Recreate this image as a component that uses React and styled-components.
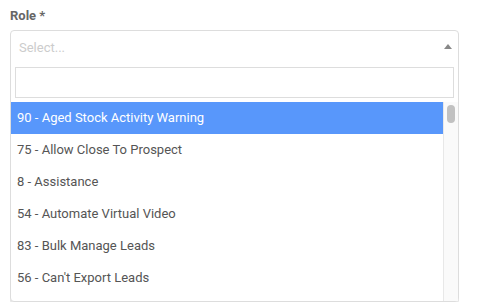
import styled, { createGlobalStyle } from "styled-components";

const GlobalStyle = createGlobalStyle`
    body {
        margin: 0;
        background: #fff;
        font-family: Roboto, "Liberation Sans", sans-serif;
    }
`

const options = [
    '90 - Aged Stock Activity Warning',
    '75 - Allow Close To Prospect',
    '8 - Assistance',
    '54 - Automate Virtual Video',
    '83 - Bulk Manage Leads',
    '56 - Can\'t Export Leads',
]

const App = () => {
    return (
        <>
            <GlobalStyle />
            <Field>
                <Label>Role *</Label>
                <Select>
                    <Selection>
                        <Placeholder>Select...</Placeholder>
                        <Arrow />
                    </Selection>
                    <Dropdown>
                        <SearchWrap>
                            <Search type="text" />
                        </SearchWrap>
                        <ListWrap>
                            <List>
                                {options.map((o, i) => (
                                    <Option key={o} highlighted={i === 0 ? 1 : 0}>{o}</Option>
                                ))}
                            </List>
                            <Track>
                                <Thumb />
                            </Track>
                        </ListWrap>
                    </Dropdown>
                </Select>
            </Field>
        </>
    );
};

export default App;

const Field = styled.div`
    padding: 8px 20px 0 10px;
    width: 449px;
`

const Label = styled.div`
    font-size: 13px;
    font-weight: 700;
    color: #666;
    line-height: 16px;
    margin-bottom: 6px;
`

const Select = styled.div`
    border: 1px solid #ddd;
    border-radius: 4px;
    background: #fff;
    box-shadow: 0 2px 0 #e8e8e8;
`

const Selection = styled.div`
    display: flex;
    align-items: center;
    justify-content: space-between;
    height: 32px;
    padding: 0 6px 0 8px;
`

const Placeholder = styled.span`
    font-size: 13px;
    color: #ccc;
`

const Arrow = styled.span`
    width: 0;
    height: 0;
    border-left: 4px solid transparent;
    border-right: 4px solid transparent;
    border-bottom: 5px solid #888;
    margin-top: -1px;
`

const Dropdown = styled.div`
    display: flex;
    flex-direction: column;
`

const SearchWrap = styled.div`
    padding: 4px;
`

const Search = styled.input`
    display: block;
    box-sizing: border-box;
    width: 100%;
    height: 31px;
    border: 1px solid #ddd;
    outline: none;
    padding: 4px;
`

const ListWrap = styled.div`
    display: flex;
    height: 199px;
`

const List = styled.ul`
    flex: 1;
    margin: 0;
    padding: 0;
    list-style: none;
`

const Option = styled.li`
    height: 32px;
    display: flex;
    align-items: center;
    padding: 0 6px 1px;
    box-sizing: border-box;
    font-size: 13px;
    color: ${props => props.highlighted ? '#fff' : '#555'};
    background: ${props => props.highlighted ? '#5897fb' : 'transparent'};
`

const Track = styled.div`
    width: 14px;
    background: #fafafa;
    border-left: 1px solid #e8e8e8;
    display: flex;
    justify-content: center;
    padding-top: 3px;
`

const Thumb = styled.div`
    width: 8px;
    height: 18px;
    border-radius: 4px;
    background: #c1c1c1;
`
